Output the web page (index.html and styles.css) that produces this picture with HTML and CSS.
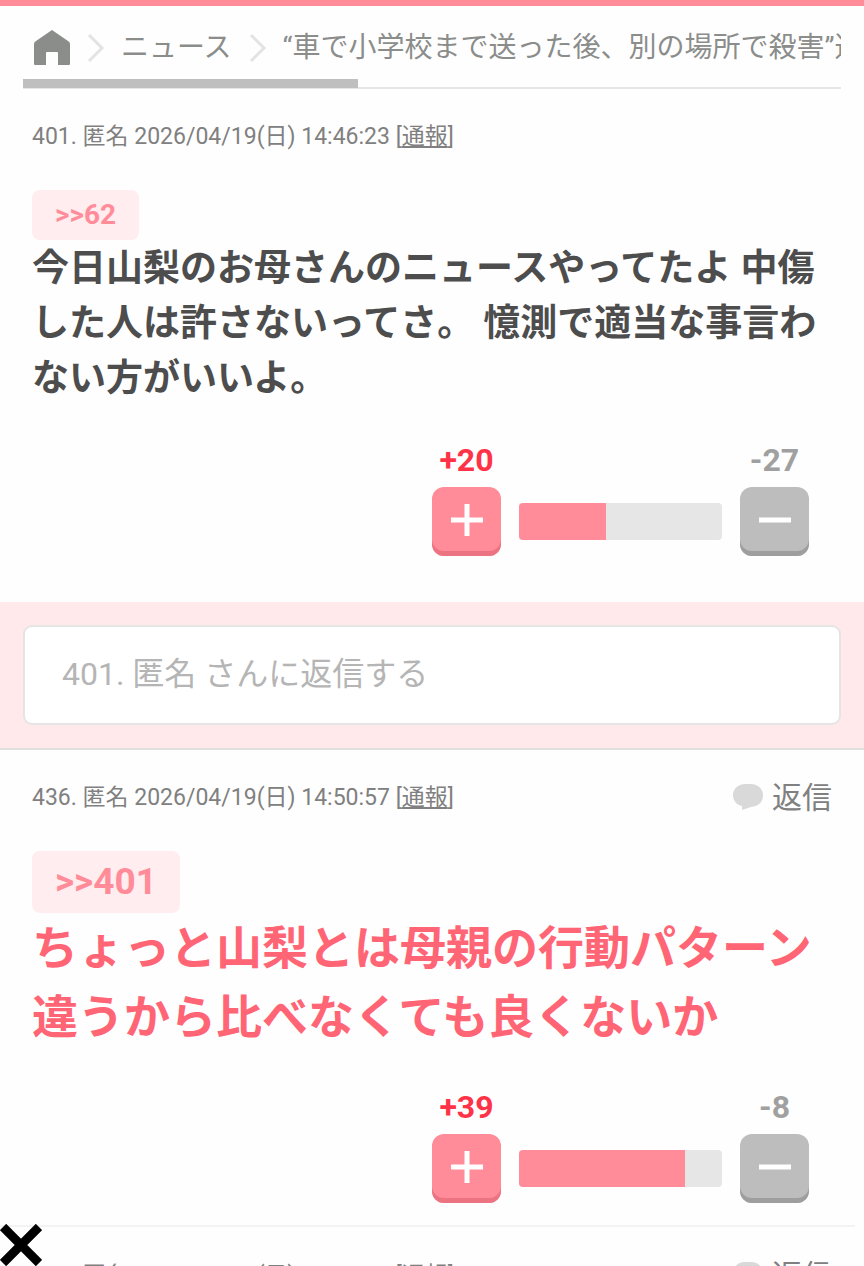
FILE: index.html
```html
<!DOCTYPE html>
<html lang="ja">
<head>
<meta charset="utf-8">
<meta name="viewport" content="width=device-width, initial-scale=1">
<title>ニュース</title>
<link rel="stylesheet" href="styles.css">
</head>
<body>
<header class="topbar"></header>
<nav class="breadcrumb" aria-label="パンくず">
  <div class="crumbs">
    <a class="crumb" href="#" aria-label="ホーム"><svg class="home" viewBox="0 0 36 36"><path d="M18 0 34 11Q36 12 36 14V34Q36 35 35 35H24V23Q24 22 23 22H13Q12 22 12 23V35H1Q0 35 0 34V14Q0 12 2 11Z"/></svg></a>
    <svg class="chevron" viewBox="0 0 18 30"><path d="M2 2 15 15 2 28"/></svg>
    <a class="crumb" href="#">ニュース</a>
    <svg class="chevron" viewBox="0 0 18 30"><path d="M2 2 15 15 2 28"/></svg>
    <a class="crumb" href="#">“車で小学校まで送った後、別の場所で殺害”遺</a>
  </div>
  <div class="scroll-thumb"></div>
</nav>
<main>
  <article class="post">
    <header class="meta"><span>401. 匿名 2026/04/19(日) 14:46:23 [<a href="#">通報</a>]</span></header>
    <a class="anchor" href="#">&gt;&gt;62</a>
    <p class="body">今日山梨のお母さんのニュースやってたよ 中傷した人は許さないってさ。 憶測で適当な事言わない方がいいよ。</p>
    <div class="votes">
      <div class="vote plus"><span class="count">+20</span><button type="button" aria-label="プラス"><svg viewBox="0 0 34 34"><path d="M17 1V33M1 17H33"/></svg></button></div>
      <div class="meter"><div class="fill" style="width:43%"></div></div>
      <div class="vote minus"><span class="count">-27</span><button type="button" aria-label="マイナス"><svg viewBox="0 0 34 34"><path d="M1 17H33"/></svg></button></div>
    </div>
  </article>
  <form class="reply-form">
    <input class="reply-input" type="text" aria-label="返信" placeholder="401. 匿名 さんに返信する">
  </form>
  <article class="post reply">
    <header class="meta"><span>436. 匿名 2026/04/19(日) 14:50:57 [<a href="#">通報</a>]</span><a class="reply-link" href="#"><svg class="bubble" viewBox="0 0 30 27"><path d="M12 0H18C25 0 30 5 30 11C30 18 26 22 18 23L9 26V22C4 21 0 17 0 11C0 5 5 0 12 0Z"/></svg>返信</a></header>
    <a class="anchor large" href="#">&gt;&gt;401</a>
    <p class="body large">ちょっと山梨とは母親の行動パターン違うから比べなくても良くないか</p>
    <div class="votes">
      <div class="vote plus"><span class="count">+39</span><button type="button" aria-label="プラス"><svg viewBox="0 0 34 34"><path d="M17 1V33M1 17H33"/></svg></button></div>
      <div class="meter"><div class="fill" style="width:82%"></div></div>
      <div class="vote minus"><span class="count">-8</span><button type="button" aria-label="マイナス"><svg viewBox="0 0 34 34"><path d="M1 17H33"/></svg></button></div>
    </div>
  </article>
  <article class="post next">
    <header class="meta"><span>443. 匿名 2026/04/19(日) 14:53:29 [<a href="#">通報</a>]</span><a class="reply-link" href="#"><svg class="bubble" viewBox="0 0 30 27"><path d="M12 0H18C25 0 30 5 30 11C30 18 26 22 18 23L9 26V22C4 21 0 17 0 11C0 5 5 0 12 0Z"/></svg>返信</a></header>
  </article>
</main>
<button class="close" type="button" aria-label="閉じる"><svg viewBox="0 0 42 42"><path d="M3 3 39 39M39 3 3 39"/></svg></button>
</body>
</html>
```

FILE: styles.css
```css
* { box-sizing: border-box; }
body {
  margin: 0;
  height: 100vh;
  overflow: hidden;
  background: #fefefe;
  color: #4d4d4d;
  font-family: Roboto, "Noto Sans CJK JP", sans-serif;
}
a { color: inherit; text-decoration: none; }
svg { display: block; }
button { padding: 0; border: 0; background: none; font: inherit; }

.topbar { height: 6px; background: #ff8c98; }

.breadcrumb {
  margin: 0 23px;
  padding-top: 17px;
  border-bottom: 2px solid #e6e6e6;
}
.crumbs {
  display: flex;
  align-items: center;
  height: 50px;
  padding-left: 11px;
  overflow: hidden;
  color: #8b8d8b;
  font-size: 28px;
  line-height: 50px;
  white-space: nowrap;
}
.crumb { flex: none; }
.home { width: 36px; height: 36px; fill: #8b8d8b; }
.chevron {
  flex: none;
  width: 18px;
  height: 30px;
  margin: 0 16px 0 17px;
  fill: none;
  stroke: #e3e3e3;
  stroke-width: 3;
}
.scroll-thumb { width: 41%; height: 9px; margin-top: 6px; margin-bottom: -1px; background: #bfbfbf; }

.post { padding: 21px 32px 46px; }
.meta {
  display: flex;
  justify-content: space-between;
  align-items: center;
  height: 48px;
  margin-bottom: 32px;
  color: #808080;
  font-size: 23px;
  white-space: nowrap;
}
.meta span a { text-decoration: underline; }
.reply-link { display: flex; align-items: center; gap: 9px; font-size: 30px; }
.bubble { width: 30px; height: 27px; margin-top: 4px; fill: #d9d9d9; }

.anchor {
  display: block;
  width: fit-content;
  padding: 0 23px;
  border-radius: 8px;
  background: #ffedef;
  color: #ff8c98;
  font-size: 28px;
  font-weight: 700;
  line-height: 50px;
}
.anchor.large { font-size: 37px; line-height: 62px; }
.body {
  margin: 1px 0 35px;
  font-size: 37px;
  font-weight: 700;
  line-height: 55px;
}
.body.large { margin-bottom: 36px; color: #ff6575; font-size: 46px; line-height: 69px; }

.votes {
  display: flex;
  justify-content: flex-end;
  align-items: flex-end;
  gap: 18px;
  padding-right: 23px;
}
.vote { width: 69px; }
.count {
  display: block;
  margin-bottom: 8px;
  color: #a0a0a0;
  font-size: 32px;
  font-weight: 700;
  line-height: 38px;
  text-align: center;
}
.plus .count { color: #ff3347; }
.vote button {
  display: flex;
  align-items: center;
  justify-content: center;
  width: 69px;
  height: 69px;
  padding-bottom: 4px;
  border-radius: 12px;
  background: #bdbdbd;
  box-shadow: inset 0 -5px #9e9e9e;
}
.plus button { background: #ff8c98; box-shadow: inset 0 -5px #ec7482; }
.vote svg { width: 34px; height: 34px; fill: none; stroke: #fff; stroke-width: 5; }
.meter {
  width: 203px;
  height: 37px;
  margin-bottom: 16px;
  overflow: hidden;
  border-radius: 4px;
  background: #e6e6e6;
}
.fill { height: 100%; background: #ff8c98; }

.reply-form {
  padding: 23px;
  border-bottom: 2px solid #e2dfdf;
  background: #ffe9ea;
}
.reply-input {
  display: block;
  width: 100%;
  height: 100px;
  padding: 0 37px 2px;
  border: 2px solid #e5e5e5;
  border-radius: 9px;
  background: #fff;
  font: 32px Roboto, "Noto Sans CJK JP", sans-serif;
}
.reply-input::placeholder { color: #b5b5b5; opacity: 1; }
.reply { padding-bottom: 22px; }
.next { margin-right: 9px; padding-top: 22px; padding-right: 23px; border-top: 2px solid #f3f3f3; }

.close { position: fixed; left: 0; bottom: 0; }
.close svg { width: 42px; height: 42px; fill: none; stroke: #000; stroke-width: 9; }
```
